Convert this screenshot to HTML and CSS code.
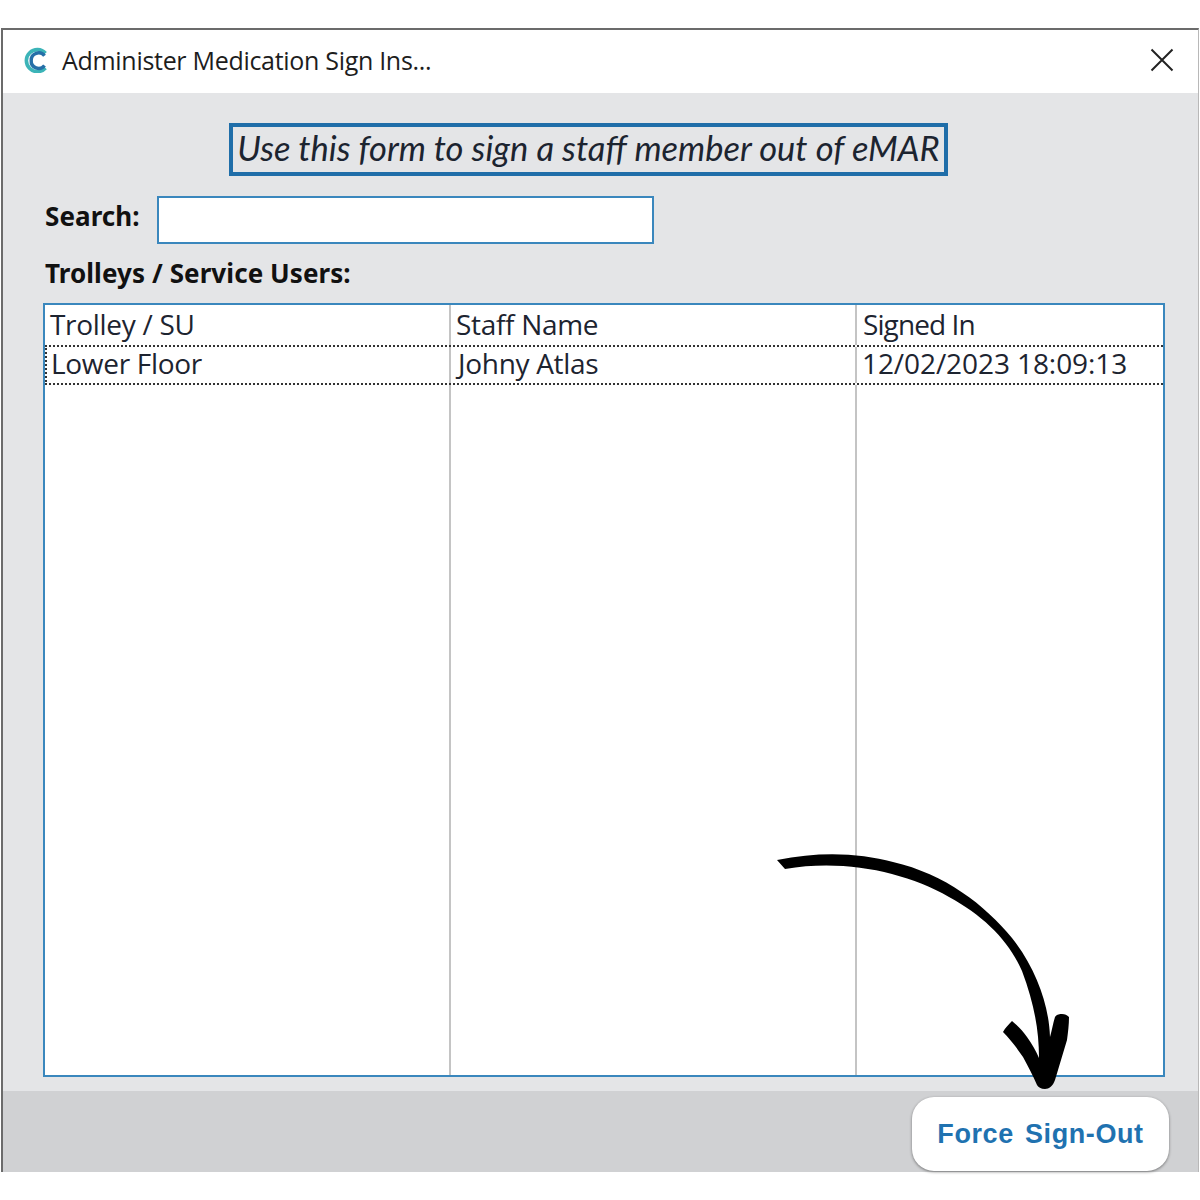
FILE: index.html
```html
<!DOCTYPE html>
<html lang="en">
<head>
<meta charset="utf-8">
<title>Administer Medication Sign Ins...</title>
<link rel="stylesheet" href="styles.css">
</head>
<body>
<div class="window">
  <header class="titlebar">
    <svg class="logo" viewBox="0 0 26 26" width="26" height="26" aria-hidden="true">
      <path d="M22.5 6.2A11 11 0 1 0 22.5 21" fill="none" stroke="#3cb4b8" stroke-width="3.6"/>
      <path d="M21.5 8.8A7.4 7.4 0 0 0 8.2 13.5A7.4 7.4 0 0 0 21.5 18.4" fill="none" stroke="#256fa8" stroke-width="3.4"/>
    </svg>
    <span class="title">Administer Medication Sign Ins...</span>
    <svg class="close" viewBox="0 0 24 24" width="24" height="24" aria-hidden="true">
      <path d="M1.5 1.5L22.5 22.5M22.5 1.5L1.5 22.5" fill="none" stroke="#222" stroke-width="2"/>
    </svg>
  </header>
  <main class="content">
    <div class="banner-row"><div class="banner">Use this form to sign a staff member out of eMAR</div></div>
    <div class="search-row">
      <label class="label" for="search">Search:</label>
      <input class="search-input" id="search" type="text">
    </div>
    <div class="label list-label">Trolleys / Service Users:</div>
    <div class="list">
      <div class="list-row list-head">
        <div class="cell">Trolley / SU</div>
        <div class="cell">Staff Name</div>
        <div class="cell cell-signed">Signed In</div>
      </div>
      <div class="list-row list-selected">
        <div class="cell">Lower Floor</div>
        <div class="cell cell-name">Johny Atlas</div>
        <div class="cell cell-date">12/02/2023 18:09:13</div>
      </div>
      <div class="list-row list-fill">
        <div class="cell"></div>
        <div class="cell"></div>
        <div class="cell"></div>
      </div>
    </div>
  </main>
  <footer class="footer">
    <button class="force-btn" type="button">Force Sign-Out</button>
  </footer>
  <svg class="arrow" viewBox="770 850 310 245" width="310" height="245" aria-hidden="true">
    <path fill="#000" d="M777 860C820 851 860 853 893 862C945 874 985 905 1012 938C1036 968 1049 1005 1050 1037C1052 1030 1053 1023 1055 1017C1057 1014 1060 1014 1062 1014C1065 1014 1067 1015 1069 1017C1069 1025 1068 1032 1067 1040L1055 1080C1053 1086 1049 1089 1045 1089C1041 1089 1038 1087 1037 1085C1033 1076 1028 1066 1023 1057C1017 1048 1010 1039 1003 1032C1005 1028 1009 1024 1012 1021C1018 1026 1023 1031 1027 1037C1032 1044 1036 1051 1039 1058C1039 1030 1034 1003 1022 971C1009 941 984 916 949 897C905 872 845 859 785 869Z"/>
  </svg>
</div>
</body>
</html>
```
FILE: styles.css
```css
* { box-sizing: border-box; }
html, body { margin: 0; background: #fff; }
body { padding-top: 28px; height: 1200px; overflow: hidden; }

.window {
  position: relative;
  display: flex;
  flex-direction: column;
  width: 1198px;
  height: 1144px;
  margin-left: 1px;
  border-top: 2px solid #6b6b6b;
  border-left: 2px solid #6b6b6b;
  border-right: 1px solid #b8b8b8;
}

.titlebar {
  display: flex;
  align-items: center;
  height: 63px;
  padding-left: 20px;
  padding-right: 24px;
  background: #fff;
}
.logo { flex: none; margin-top: -3px; }
.title {
  margin-left: 13px;
  margin-top: -3px;
  font: 400 25px "Open Sans", "Noto Sans", sans-serif;
  letter-spacing: -0.3px;
  color: #1d1d1d;
}
.close { margin-left: auto; flex: none; margin-top: -3px; }

.content {
  flex: 1;
  min-height: 0;
  display: flex;
  flex-direction: column;
  padding: 30px 33px 14px 40px;
  background: #e4e5e7;
}

.banner-row { padding-left: 186px; }
.banner {
  display: flex;
  align-items: center;
  justify-content: center;
  width: 719px;
  height: 53px;
  padding-bottom: 4px;
  border: 4px solid #1f6ea9;
  font: italic 400 34.5px "Lato", "Open Sans", sans-serif;
  white-space: nowrap;
  color: #1c2430;
}

.search-row {
  display: flex;
  align-items: flex-start;
  margin-top: 20px;
}
.label {
  font: 700 26px "Noto Sans", "Open Sans", sans-serif;
  letter-spacing: 0.08px;
  color: #111;
  white-space: nowrap;
}
.search-row .label { width: 114px; padding-left: 2px; line-height: 40px; }
.search-input {
  width: 497px;
  height: 48px;
  padding: 0;
  background: #fff;
  border: 2px solid #3a87bd;
  border-radius: 0;
  outline: none;
}
.list-label { padding-left: 2px; margin-top: 11px; line-height: 36px; }

.list {
  flex: 1;
  min-height: 0;
  display: flex;
  flex-direction: column;
  margin-top: 12px;
  background: #fff;
  border: 2px solid #3a87bd;
}
.list-row {
  display: grid;
  grid-template-columns: 406px 406px 1fr;
}
.list-head { height: 40px; }
.list-selected {
  height: 40px;
  grid-template-columns: 404px 406px 1fr;
  border-top: 2px dotted #333;
  border-bottom: 2px dotted #333;
  border-left: 2px dotted #333;
}
.list-selected .cell:first-child { padding-left: 4px; }
.list-fill { flex: 1; }
.cell {
  padding-left: 5px;
  border-right: 2px solid #c4c4c4;
  font: 400 28px/38px "Open Sans", "Noto Sans", sans-serif;
  letter-spacing: -0.3px;
  color: #1d2430;
  white-space: nowrap;
}
.cell:last-child { border-right: 0; }
.list-selected .cell { line-height: 32px; }
.list-selected .cell-name { padding-left: 7px; }
.cell-signed { letter-spacing: -0.9px; padding-left: 6px; }
.cell-date { letter-spacing: -0.08px; }

.footer {
  display: flex;
  justify-content: flex-end;
  align-items: flex-start;
  height: 81px;
  flex: none;
  padding: 6px 29px 0 0;
  background: #d0d1d3;
}
.force-btn {
  width: 257px;
  height: 74px;
  background: #fff;
  border: 0;
  border-radius: 22px;
  box-shadow: 0 1px 3px rgba(0, 0, 0, 0.45);
  font: 700 27px "Liberation Sans", Arial, sans-serif;
  letter-spacing: 0.6px;
  word-spacing: 3px;
  color: #1f72b0;
}

.arrow {
  position: absolute;
  left: 767px;
  top: 820px;
}
```
